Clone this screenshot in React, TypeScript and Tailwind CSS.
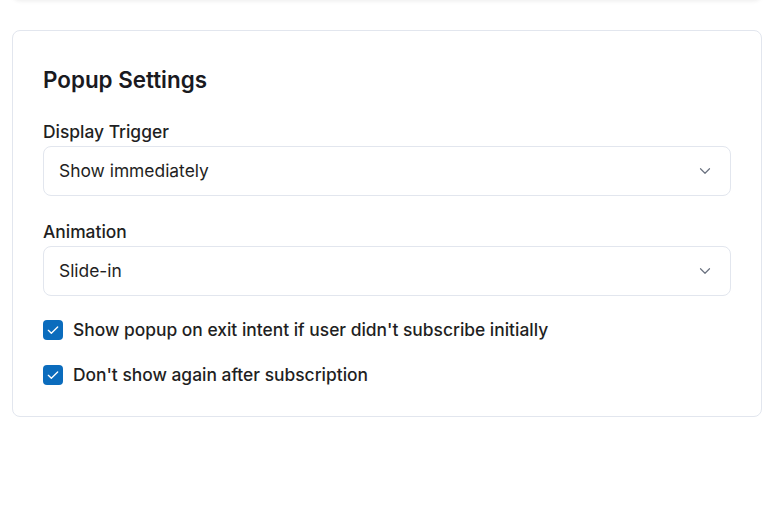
import React from "react";

function Chevron() {
  return (
    <svg width="18" height="18" viewBox="0 0 24 24" fill="none" stroke="#6b7280" strokeWidth="1.6" strokeLinecap="round" strokeLinejoin="round">
      <path d="M6 9l6 6 6-6" />
    </svg>
  );
}

function Check() {
  return (
    <span className="flex h-5 w-5 shrink-0 items-center justify-center rounded-[4px] bg-[#0b6cbd]">
      <svg width="16" height="16" viewBox="0 0 24 24" fill="none" stroke="white" strokeWidth="2" strokeLinecap="round" strokeLinejoin="round">
        <path d="M5 12.5l4.5 4.5L19 7.5" />
      </svg>
    </span>
  );
}

function Select({ label, value }: { label: string; value: string }) {
  return (
    <div className="flex flex-col">
      <div className="mb-[2px] text-[17.4px] font-medium leading-6 text-[#1f1f23]">{label}</div>
      <div className="flex h-[50px] items-center justify-between rounded-lg border border-[#e2e6ee] bg-white pl-[15px] pr-[16px]">
        <span className="text-[17.4px] text-[#1f1f23]">{value}</span>
        <Chevron />
      </div>
    </div>
  );
}

export default function App() {
  return (
    <div className="min-h-[521px] bg-white pl-3 pr-[5px]" style={{ fontFamily: "Inter, 'Noto Sans', sans-serif" }}>
      <div className="-mt-5 h-5 rounded-b-lg bg-white shadow-[0_1px_4px_rgba(0,0,0,0.08)]" />
      <div className="mt-[30px] rounded-lg border border-[#e2e6ee] bg-white px-[30px] pt-[35px] pb-[29px]">
        <h2 className="text-[22.4px] font-semibold leading-7 text-[#1a1a1f]">Popup Settings</h2>
        <div className="mt-[26px] flex flex-col gap-[24px]">
          <Select label="Display Trigger" value="Show immediately" />
          <Select label="Animation" value="Slide-in" />
        </div>
        <div className="mt-[22px] flex flex-col gap-[21px]">
          <label className="flex items-center gap-[10px] text-[17.4px] font-medium leading-6 text-[#1f1f23]">
            <Check />
            Show popup on exit intent if user didn't subscribe initially
          </label>
          <label className="flex items-center gap-[10px] text-[17.4px] font-medium leading-6 text-[#1f1f23]">
            <Check />
            Don't show again after subscription
          </label>
        </div>
      </div>
    </div>
  );
}
